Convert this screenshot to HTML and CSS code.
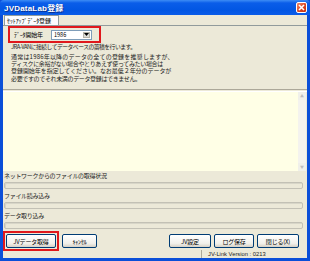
FILE: index.html
```html
<!DOCTYPE html>
<html lang="ja">
<head>
    <meta charset="UTF-8">
    <title>JVDataLab登録</title>
    <link rel="stylesheet" href="styles.css">
</head>
<body>
    <div class="window">
        <!-- Title bar -->
        <div class="titlebar">
            <span class="title">JVDataLab登録</span>
            <span class="close-btn">
                <svg width="7" height="7" viewBox="0 0 7 7"><path d="M1 1L6 6M6 1L1 6" stroke="#fff" stroke-width="1.6"/></svg>
            </span>
        </div>

        <div class="frame">
            <div class="tabs">
                <div class="tab">ｾｯﾄｱｯﾌﾟﾃﾞｰﾀ登録</div>
            </div>

            <div class="panel">
                <div class="start-row highlight">
                    <span class="label">ﾃﾞｰﾀ開始年</span>
                    <div class="combo">
                        <span class="combo-value">1986</span>
                        <span class="combo-btn">
                            <svg width="5" height="3" viewBox="0 0 5 3"><path d="M0 0H5L2.5 3Z" fill="#000"/></svg>
                        </span>
                    </div>
                </div>
                <p class="intro">JRA-VANに接続してデータベースの蓄積を行います。</p>
                <div class="note">
                    <span class="line line-1">通常は1986年以降のデータの全ての登録を推奨しますが、</span>
                    <span class="line line-2">ディスクに余裕がない場合やとりあえず使ってみたい場合は</span>
                    <span class="line line-3">登録開始年を指定してください。なお最低２年分のデータが</span>
                    <span class="line line-4">必要ですのでそれ未満のデータ登録はできません。</span>
                </div>
            </div>

            <div class="separator"></div>

            <!-- Log area -->
            <div class="log">
                <div class="log-body"></div>
                <div class="scrollbar">
                    <span class="arrow">▲</span>
                    <span class="arrow">▼</span>
                </div>
            </div>

            <!-- Progress -->
            <div class="progress-list">
                <div class="progress-item">
                    <div class="progress-label">ネットワークからのファイルの取得状況</div>
                    <div class="progress-bar"></div>
                </div>
                <div class="progress-item">
                    <div class="progress-label">ファイル読み込み</div>
                    <div class="progress-bar"></div>
                </div>
                <div class="progress-item">
                    <div class="progress-label">データ取り込み</div>
                    <div class="progress-bar"></div>
                </div>
            </div>

            <div class="buttons">
                <div class="highlight btn-wrap">
                    <button class="btn btn-get">JVデータ取得</button>
                </div>
                <button class="btn btn-cancel">ｷｬﾝｾﾙ</button>
                <div class="spacer"></div>
                <button class="btn btn-setting">JV設定</button>
                <button class="btn btn-log">ログ保存</button>
                <button class="btn btn-close">閉じる(X)</button>
            </div>

            <div class="statusbar">
                <div class="status-cell"></div>
                <div class="status-cell version">JV-Link Version : 0213</div>
            </div>
        </div>
    </div>
</body>
</html>
```

FILE: styles.css
```css
body {
    margin: 0;
    padding: 0;
    background: #fff;
    font-family: "Noto Sans CJK JP", "Noto Sans", sans-serif;
    color: #000;
}

.window {
    width: 310px;
    height: 261px;
    display: flex;
    flex-direction: column;
    background: #0b4fd8;
}

.titlebar {
    height: 17px;
    display: flex;
    align-items: center;
    justify-content: space-between;
    padding: 0 4px 0 4px;
    background: linear-gradient(#3d8cf5 0, #0a5de9 3px, #0256e3 10px, #0a5ce8 15px, #0645c8 17px);
    border-radius: 4px 4px 0 0;
}

.title {
    color: #fff;
    font-family: "Liberation Sans", "Noto Sans CJK JP", sans-serif;
    font-weight: bold;
    font-size: 8px;
    text-shadow: 1px 1px 0 #0a2f8f;
    letter-spacing: 0.2px;
}

.close-btn {
    width: 9px;
    height: 9px;
    border: 1px solid #fff;
    border-radius: 2px;
    background: linear-gradient(135deg, #f08a6a, #d84320 60%, #c23210);
    display: flex;
    align-items: center;
    justify-content: center;
    margin-right: -1px;
}

.close-btn svg {
    display: block;
}

.frame {
    flex: 1;
    margin: 0 3px 3px 3px;
    background: #ece9d8;
    display: flex;
    flex-direction: column;
}

.tabs {
    height: 10px;
    padding-left: 1px;
    display: flex;
    align-items: flex-end;
}

.tab {
    width: 51px;
    height: 9px;
    border: 1px solid #919b9c;
    border-bottom: none;
    background: #fcfcfe;
    font-size: 6px;
    line-height: 9px;
    padding-left: 2px;
    letter-spacing: -0.1px;
    white-space: nowrap;
    overflow: hidden;
}

.panel {
    height: 61px;
    border-top: 1px solid #919b9c;
    padding: 0 0 0 8px;
}

.highlight {
    border: 2px solid #e0181c;
}

.start-row {
    width: 85px;
    height: 13px;
    margin: 0 0 0 -3px;
    display: flex;
    align-items: center;
    padding-left: 4px;
}

.label {
    font-size: 6px;
    width: 37px;
    letter-spacing: -0.2px;
}

.combo {
    width: 39px;
    height: 8px;
    border: 1px solid #7f9db9;
    background: #fff;
    display: flex;
    align-items: center;
    justify-content: space-between;
}

.combo-value {
    font-size: 5.5px;
    padding-left: 2px;
}

.combo-btn {
    width: 7px;
    height: 6px;
    margin-right: 1px;
    background: #dcdcd6;
    border: 1px solid #b6b3a8;
    display: flex;
    align-items: center;
    justify-content: center;
    box-sizing: border-box;
}

.intro {
    margin: 0;
    font-size: 5.8px;
    line-height: 7px;
    letter-spacing: -0.5px;
    color: #222;
    white-space: nowrap;
}

.note {
    margin-top: 3px;
    color: #222;
}

.line {
    display: block;
    height: 7.2px;
    font-size: 6px;
    line-height: 7.2px;
    letter-spacing: -0.35px;
    white-space: nowrap;
    overflow: hidden;
}

.line-1 {
    letter-spacing: 0.2px;
}

.line-3 {
    letter-spacing: -0.05px;
}

.separator {
    height: 1px;
    margin-top: 2px;
    border-top: 1px solid #aca899;
    border-bottom: 1px solid #fff;
}

.log {
    height: 79px;
    margin-right: 1px;
    display: flex;
    background: #ffffe6;
}

.log-body {
    flex: 1;
}

.scrollbar {
    width: 8px;
    background: #f4f3ee;
    display: flex;
    flex-direction: column;
    justify-content: space-between;
}

.arrow {
    font-size: 4px;
    line-height: 8px;
    height: 8px;
    text-align: center;
    color: #bdbdbd;
    background: #f0f0ea;
}

.progress-list {
    padding: 1px 4px 0 1px;
}

.progress-item {
    height: 20px;
}

.progress-label {
    font-size: 6px;
    line-height: 8px;
    height: 8px;
    letter-spacing: -0.3px;
    color: #222;
}

.progress-bar {
    height: 5px;
    margin-top: 2px;
    border: 1px solid #c3c1b5;
    border-radius: 2px;
    background: #ece9d8;
    box-shadow: inset 1px 1px 0 #d8d6c8;
}

.buttons {
    display: flex;
    align-items: center;
    height: 18px;
}

.btn-wrap {
    padding: 1px 1px;
    display: flex;
}

.btn {
    font-family: "Noto Sans CJK JP", sans-serif;
    font-size: 6px;
    height: 14px;
    padding: 0;
    border: 1px solid #003c74;
    border-radius: 2px;
    background: linear-gradient(#ffffff, #f1f0ea 70%, #d6d0c5);
    color: #000;
    letter-spacing: -0.2px;
}

.btn-get {
    width: 50px;
}

.btn-cancel {
    width: 35px;
    margin-left: 3px;
}

.spacer {
    flex: 1;
}

.btn-setting {
    width: 42px;
}

.btn-log {
    width: 40px;
    margin-left: 3px;
}

.btn-close {
    width: 42px;
    margin-left: 3px;
    margin-right: 8px;
}

.statusbar {
    flex: 1;
    display: flex;
    align-items: flex-end;
}

.status-cell {
    width: 198px;
    height: 8px;
}

.version {
    flex: 1;
    font-family: "Liberation Sans", sans-serif;
    font-size: 5.8px;
    line-height: 8px;
    padding-left: 6px;
    border-left: 1px solid #aca899;
    color: #222;
}
```
